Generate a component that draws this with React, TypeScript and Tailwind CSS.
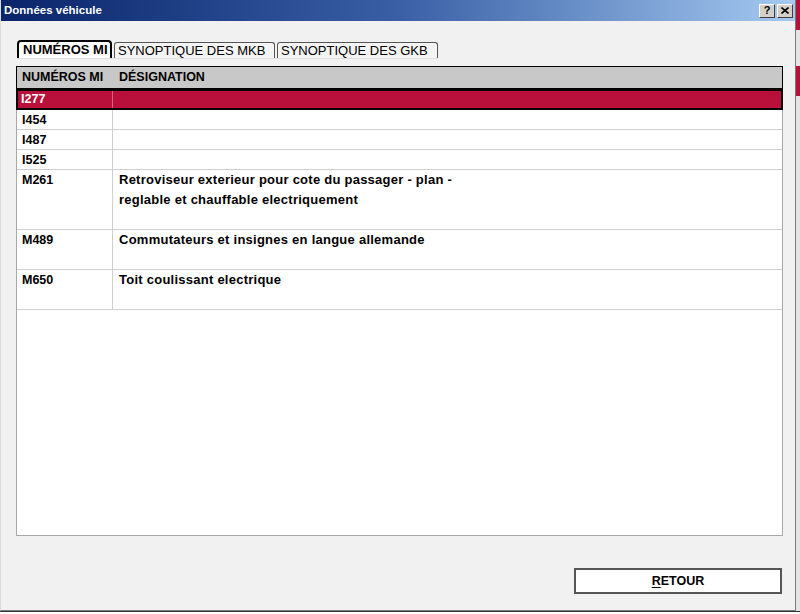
import React from "react";

const rows: { code: string; lines: string[]; h: number }[] = [
  { code: "I454", lines: [], h: 20 },
  { code: "I487", lines: [], h: 20 },
  { code: "I525", lines: [], h: 20 },
  {
    code: "M261",
    lines: [
      "Retroviseur exterieur pour cote du passager - plan -",
      "reglable et chauffable electriquement",
    ],
    h: 60,
  },
  { code: "M489", lines: ["Commutateurs et insignes en langue allemande"], h: 40 },
  { code: "M650", lines: ["Toit coulissant electrique"], h: 40 },
];

const font = { fontFamily: '"Liberation Sans", Arial, sans-serif' };

function TitleButton({ children }: { children: React.ReactNode }) {
  return (
    <div className="w-[16px] h-[14px] bg-[#d4d0c8] border-t border-l border-t-white border-l-white border-b border-r border-b-[#404040] border-r-[#404040] flex items-center justify-center text-[11px] font-bold leading-none text-black">
      {children}
    </div>
  );
}

export default function App() {
  return (
    <div className="w-[800px] h-[614px] overflow-hidden flex flex-col bg-[#d8d8d8]" style={font}>
      <div className="flex h-[611px]">
        <div className="w-[796px] h-full flex flex-col bg-[#f1f1f1] border-l border-l-[#dcdcdc] border-r border-r-[#7a7a7a] border-b border-b-[#7a7a7a]">
          {/* title bar */}
          <div className="h-[21px] flex items-center justify-between pl-[3px] pr-[2px] bg-gradient-to-r from-[#0a246a] via-[#3a5fa5] to-[#a6caf0]">
            <span className="text-white font-bold text-[11.5px] leading-none">Données véhicule</span>
            <div className="flex gap-[2px]">
              <TitleButton>?</TitleButton>
              <TitleButton>
                <svg width="8" height="7" viewBox="0 0 8 7">
                  <path d="M0.5 0.5 L7.5 6.5 M7.5 0.5 L0.5 6.5" stroke="#000" strokeWidth="1.6" />
                </svg>
              </TitleButton>
            </div>
          </div>

          {/* body */}
          <div className="flex-1 flex flex-col pl-[15px] pr-[13px] pt-[19px]">
            {/* tabs */}
            <div className="flex items-end gap-[2px] h-[18px] pl-[1px]">
              <div className="w-[95px] h-[18px] pl-[4px] flex items-center bg-white border-2 border-b-0 border-black rounded-t-[4px] text-[13px] font-bold text-black">
                NUMÉROS MI
              </div>
              <div className="w-[161px] h-[16px] pl-[3px] flex items-center bg-[#f4f4f4] border border-b-0 border-[#555] rounded-t-[3px] text-[13px] text-black">
                SYNOPTIQUE DES MKB
              </div>
              <div className="w-[161px] h-[16px] pl-[3px] flex items-center bg-[#f4f4f4] border border-b-0 border-[#555] rounded-t-[3px] text-[13px] text-black">
                SYNOPTIQUE DES GKB
              </div>
            </div>
            <div className="h-[8px] border-t border-t-[#e0e0e0] w-[421px] ml-[1px]" />

            {/* table */}
            <div className="w-[767px] h-[470px] bg-white border border-[#a8a8a8] flex flex-col">
              <div className="h-[23px] flex items-center bg-[#c8c8c8] border border-black -m-px mb-0 text-[12.5px] font-bold text-black">
                <div className="w-[96px] pl-[5px]">NUMÉROS MI</div>
                <div className="pl-[6px]">DÉSIGNATION</div>
              </div>
              <div className="h-[21px] flex bg-[#b9103b] border-2 border-black -mx-px text-[12.5px] font-bold text-white">
                <div className="w-[95px] pl-[3px] leading-[17px] border-r border-r-[#d86080]">I277</div>
                <div className="flex-1" />
              </div>
              {rows.map((r) => (
                <div
                  key={r.code}
                  className="flex border-b border-b-[#cfcfcf] text-[12.5px] font-bold text-black"
                  style={{ height: r.h }}
                >
                  <div className="w-[96px] pl-[5px] leading-[20px] border-r border-r-[#cfcfcf]">{r.code}</div>
                  <div className="flex-1 pl-[6px] leading-[20px] text-[13px] tracking-[0.25px]">
                    {r.lines.map((l) => (
                      <div key={l}>{l}</div>
                    ))}
                  </div>
                </div>
              ))}
            </div>

            {/* footer */}
            <div className="flex justify-end pt-[32px]">
              <button className="w-[208px] h-[26px] bg-white border-2 border-[#555] text-[12.5px] font-bold text-black flex items-center justify-center">
                <span>
                  <span className="underline underline-offset-2">R</span>ETOUR
                </span>
              </button>
            </div>
          </div>
        </div>
        <div className="flex-1 flex flex-col bg-[#e4e4e4]">
          <div className="h-[30px] bg-[#b9103b]" />
          <div className="h-[36px]" />
          <div className="h-[30px] bg-[#b9103b]" />
        </div>
      </div>
      <div className="flex-1 bg-white border-t border-t-[#333]" />
    </div>
  );
}
